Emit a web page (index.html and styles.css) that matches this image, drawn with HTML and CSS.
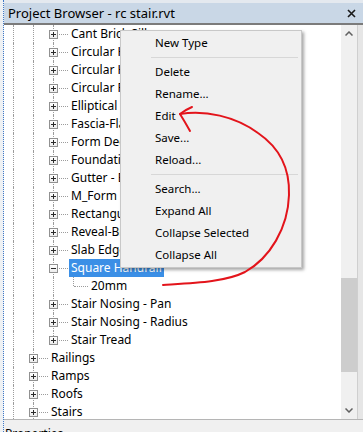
FILE: index.html
```html
<!DOCTYPE html>
<html lang="en">
<head>
    <meta charset="UTF-8">
    <title>Project Browser - rc stair.rvt</title>
    <link rel="stylesheet" href="styles.css">
</head>
<body>

    <div class="window">
        <div class="top-strip"></div>

        <!-- Title Bar -->
        <div class="titlebar">
            <span>Project Browser - rc stair.rvt</span>
            <svg class="close" width="9" height="9" viewBox="0 0 9 9">
                <path d="M1 1 L8 8 M8 1 L1 8" stroke="#1a1a1a" stroke-width="1.6" fill="none"/>
            </svg>
        </div>
        <div class="title-rule"></div>

        <div class="main">
            <!-- Tree -->
            <div class="tree">
                <div class="row"><span class="g"></span><span class="g"></span><span class="x"><i class="box plus"></i></span><span class="label">Cant Brick Sill</span></div>
                <div class="row"><span class="g"></span><span class="g"></span><span class="x"><i class="box plus"></i></span><span class="label">Circular Handrail</span></div>
                <div class="row"><span class="g"></span><span class="g"></span><span class="x"><i class="box plus"></i></span><span class="label">Circular Handrail 2</span></div>
                <div class="row"><span class="g"></span><span class="g"></span><span class="x"><i class="box plus"></i></span><span class="label">Circular Rail</span></div>
                <div class="row"><span class="g"></span><span class="g"></span><span class="x"><i class="box plus"></i></span><span class="label">Elliptical Handrail</span></div>
                <div class="row"><span class="g"></span><span class="g"></span><span class="x"><i class="box plus"></i></span><span class="label">Fascia-Flat</span></div>
                <div class="row"><span class="g"></span><span class="g"></span><span class="x"><i class="box plus"></i></span><span class="label">Form Deck</span></div>
                <div class="row"><span class="g"></span><span class="g"></span><span class="x"><i class="box plus"></i></span><span class="label">Foundation Slab</span></div>
                <div class="row"><span class="g"></span><span class="g"></span><span class="x"><i class="box plus"></i></span><span class="label">Gutter - Bevel</span></div>
                <div class="row"><span class="g"></span><span class="g"></span><span class="x"><i class="box plus"></i></span><span class="label">M_Form Deck</span></div>
                <div class="row"><span class="g"></span><span class="g"></span><span class="x"><i class="box plus"></i></span><span class="label">Rectangular Handrail</span></div>
                <div class="row"><span class="g"></span><span class="g"></span><span class="x"><i class="box plus"></i></span><span class="label">Reveal-Brick</span></div>
                <div class="row"><span class="g"></span><span class="g"></span><span class="x"><i class="box plus"></i></span><span class="label">Slab Edge-Thickened</span></div>
                <div class="row"><span class="g"></span><span class="g"></span><span class="x"><i class="box minus"></i></span><span class="label sel">Square Handrail</span></div>
                <div class="row"><span class="g"></span><span class="g"></span><span class="g"></span><span class="x last"></span><span class="label">20mm</span></div>
                <div class="row"><span class="g"></span><span class="g"></span><span class="x"><i class="box plus"></i></span><span class="label">Stair Nosing - Pan</span></div>
                <div class="row"><span class="g"></span><span class="g"></span><span class="x"><i class="box plus"></i></span><span class="label">Stair Nosing - Radius</span></div>
                <div class="row"><span class="g"></span><span class="g"></span><span class="x last"><i class="box plus"></i></span><span class="label">Stair Tread</span></div>
                <div class="row"><span class="g"></span><span class="x"><i class="box plus"></i></span><span class="label">Railings</span></div>
                <div class="row"><span class="g"></span><span class="x"><i class="box plus"></i></span><span class="label">Ramps</span></div>
                <div class="row"><span class="g"></span><span class="x"><i class="box plus"></i></span><span class="label">Roofs</span></div>
                <div class="row"><span class="g"></span><span class="x"><i class="box plus"></i></span><span class="label">Stairs</span></div>
            </div>

            <!-- Scrollbar -->
            <div class="scrollbar">
                <div class="sb-btn">
                    <svg width="8" height="5" viewBox="0 0 8 5"><path d="M0.5 4.5 L4 1 L7.5 4.5" stroke="#606060" stroke-width="1.5" fill="none"/></svg>
                </div>
                <div class="sb-track"><div class="sb-thumb"></div></div>
                <div class="sb-btn">
                    <svg width="8" height="5" viewBox="0 0 8 5"><path d="M0.5 0.5 L4 4 L7.5 0.5" stroke="#606060" stroke-width="1.5" fill="none"/></svg>
                </div>
            </div>
            <div class="edge"></div>
        </div>

        <div class="footer"><span>Properties</span></div>
    </div>

    <!-- Context Menu -->
    <div class="menu">
        <div class="menu-item">New Type</div>
        <div class="menu-sep"></div>
        <div class="menu-item">Delete</div>
        <div class="menu-item">Rename...</div>
        <div class="menu-item">Edit</div>
        <div class="menu-item">Save...</div>
        <div class="menu-item">Reload...</div>
        <div class="menu-sep"></div>
        <div class="menu-item">Search...</div>
        <div class="menu-item">Expand All</div>
        <div class="menu-item">Collapse Selected</div>
        <div class="menu-item">Collapse All</div>
    </div>

    <!-- Hand-drawn annotation -->
    <svg class="annotation" width="363" height="432" viewBox="0 0 363 432">
        <path d="M180 114 C205 110 235 116 258 133 C280 148 290 168 289 195 C288 228 270 258 245 272 C225 282 195 283 163 285"
              stroke="#e3141b" stroke-width="2" fill="none" stroke-linecap="round"/>
        <path d="M192 107 Q185 110 180 114 Q185 122 190 131"
              stroke="#e3141b" stroke-width="2" fill="none" stroke-linecap="round" stroke-linejoin="round"/>
    </svg>

</body>
</html>
```

FILE: styles.css
```css
body {
    margin: 0;
    width: 363px;
    height: 432px;
    overflow: hidden;
    position: relative;
    background: #eef1f4;
    font-family: "Noto Sans", "Open Sans", sans-serif;
    font-size: 12px;
    color: #000;
}

/* Panel window */
.window {
    margin-left: 3px;
    border-left: 1px dotted #3e78c8;
    height: 432px;
    display: flex;
    flex-direction: column;
}
.top-strip { height: 3px; background: #e4e9ef; }
.titlebar {
    height: 20px;
    background: #c9d7e6;
    display: flex;
    align-items: center;
    justify-content: space-between;
    padding: 0 7px 0 4px;
    font-size: 13px;
}
.title-rule { height: 2px; background: #7b7b7b; }

.main { flex: 1; display: flex; min-height: 0; }

/* Tree view */
.tree { flex: 1; background: #fff; padding-left: 1px; overflow: hidden; }
.row { display: flex; height: 18px; }
.g, .x { position: relative; flex: none; }
.g { width: 20px; }
.g::before, .x::before {
    content: "";
    position: absolute;
    left: 8px;
    top: 0;
    bottom: 0;
    border-left: 1px dotted #9c9c9c;
}
.x { width: 24px; display: flex; align-items: center; }
.x.last::before { bottom: 9px; }
.x::after {
    content: "";
    position: absolute;
    left: 9px;
    top: 9px;
    width: 14px;
    border-top: 1px dotted #9c9c9c;
}
.box {
    position: relative;
    z-index: 1;
    width: 7px;
    height: 7px;
    margin: 1px 0 0 4px;
    border: 1px solid #919191;
    background: linear-gradient(#ffffff, #ececec);
}
.box::before, .box.plus::after {
    content: "";
    position: absolute;
    background: #2a2a2a;
}
.box::before { left: 1px; top: 3px; width: 5px; height: 1px; }
.box.plus::after { left: 3px; top: 1px; width: 1px; height: 5px; }

.label { height: 18px; line-height: 18px; padding: 0 2px; white-space: nowrap; }
.label.sel { background: #3b8fe6; color: #fff; }

/* Scrollbar */
.scrollbar { width: 16px; background: #f0f0f0; display: flex; flex-direction: column; }
.sb-btn { height: 17px; display: flex; justify-content: center; align-items: center; }
.sb-track { flex: 1; }
.sb-thumb { margin-top: 236px; height: 94px; background: #cdcdcd; }
.edge { width: 5px; background: #e6e6e6; border-left: 1px solid #cfcfcf; }

.footer {
    height: 12px;
    background: #f0f0f0;
    border-top: 1px solid #b5b5b5;
    overflow: hidden;
    padding-left: 1px;
    line-height: 12px;
}
.footer span { display: block; padding-top: 8px; }

/* Context menu */
.menu {
    position: absolute;
    left: 120px;
    top: 30px;
    width: 180px;
    padding: 1px 0;
    background: #f0f0f0;
    border: 1px solid #c8c8c8;
    box-shadow: 2px 2px 3px rgba(0, 0, 0, 0.35);
    font-size: 11.5px;
}
.menu-item { height: 22px; line-height: 22px; padding-left: 34px; }
.menu-sep { height: 1px; background: #d7d7d7; margin: 3px 3px 3px 30px; }

.annotation { position: absolute; left: 0; top: 0; pointer-events: none; }
```
